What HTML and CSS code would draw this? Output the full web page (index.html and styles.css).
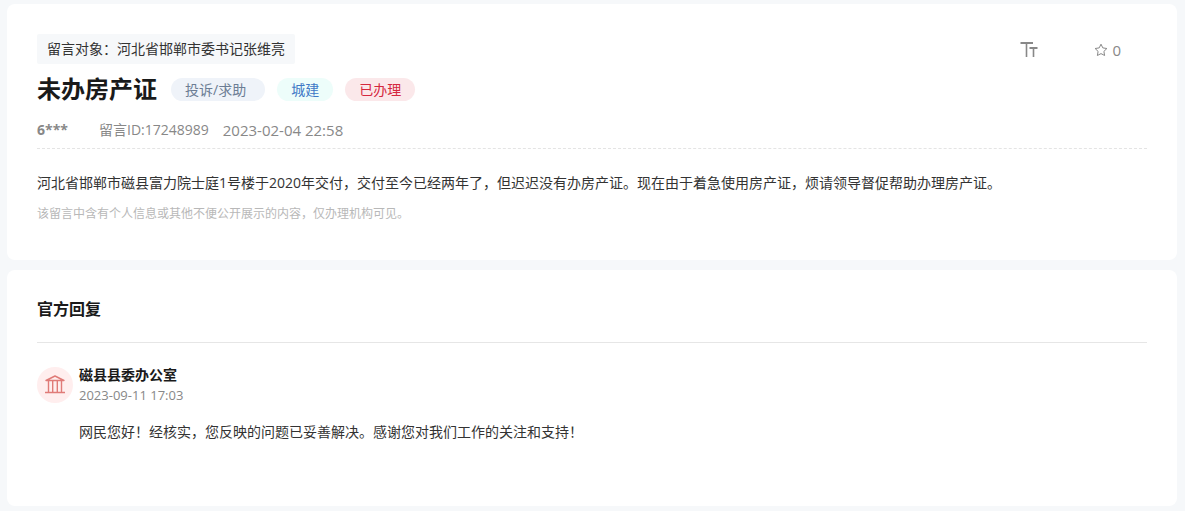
FILE: index.html
```
<!DOCTYPE html>
<html lang="zh-CN">
<head>
    <meta charset="UTF-8">
    <meta name="viewport" content="width=device-width, initial-scale=1">
    <title>未办房产证</title>
    <link rel="stylesheet" href="styles.css">
</head>
<body>
    <main class="page">
        <!-- 留言内容 -->
        <article class="card message">
            <header class="message-head">
                <div class="message-top">
                    <p class="target">留言对象：河北省邯郸市委书记张维亮</p>
                    <div class="tools">
                        <button class="tool" type="button" aria-label="字号">
                            <svg class="icon-size" viewBox="0 0 18 16" width="18" height="16" fill="none" stroke="currentColor">
                                <path d="M0.5 1H13M9.5 6H17.5" stroke-width="2"/>
                                <path d="M6.5 1V15M13.5 6V15" stroke-width="1.6"/>
                            </svg>
                        </button>
                        <button class="tool" type="button" aria-label="收藏">
                            <svg class="icon-star" viewBox="0 0 14 14" width="14" height="14" fill="none" stroke="currentColor" stroke-linejoin="round">
                                <path d="M7 1.2L8.8 4.9L12.9 5.5L9.9 8.4L10.6 12.5L7 10.6L3.4 12.5L4.1 8.4L1.1 5.5L5.2 4.9Z"/>
                            </svg>
                            <span>0</span>
                        </button>
                    </div>
                </div>
                <div class="title-row">
                    <h1 class="title">未办房产证</h1>
                    <span class="tag tag-type">投诉/求助</span>
                    <span class="tag tag-field">城建</span>
                    <span class="tag tag-state">已办理</span>
                </div>
                <div class="meta">
                    <span class="user">6***</span>
                    <span class="message-id">留言ID:17248989</span>
                    <time class="message-time" datetime="2023-02-04T22:58">2023-02-04 22:58</time>
                </div>
            </header>
            <p class="content">河北省邯郸市磁县富力院士庭1号楼于2020年交付，交付至今已经两年了，但迟迟没有办房产证。现在由于着急使用房产证，烦请领导督促帮助办理房产证。</p>
            <p class="hint">该留言中含有个人信息或其他不便公开展示的内容，仅办理机构可见。</p>
        </article>

        <!-- 官方回复 -->
        <section class="card reply">
            <h2 class="reply-title">官方回复</h2>
            <div class="reply-item">
                <div class="avatar">
                    <svg viewBox="0 0 20 20" width="20" height="20" fill="none" stroke="currentColor" stroke-width="1.4" stroke-linejoin="round" aria-hidden="true">
                        <path d="M1 5.5L10 1L19 5.5Z"/>
                        <path d="M3.5 5.5V17.5M7.7 5.5V17.5M12.3 5.5V17.5M16.5 5.5V17.5M0 17.5H20"/>
                    </svg>
                </div>
                <div class="reply-main">
                    <h3 class="reply-name">磁县县委办公室</h3>
                    <time class="reply-time" datetime="2023-09-11T17:03">2023-09-11 17:03</time>
                    <p class="reply-text">网民您好！经核实，您反映的问题已妥善解决。感谢您对我们工作的关注和支持！</p>
                </div>
            </div>
        </section>
    </main>
</body>
</html>
```
FILE: styles.css
```
* {
    margin: 0;
    padding: 0;
    box-sizing: border-box;
}

body {
    background: #f6f8fa;
    color: #333;
    font-family: "Open Sans", "Noto Sans CJK SC", sans-serif;
    font-size: 14px;
    line-height: 20px;
}

.page {
    display: flex;
    flex-direction: column;
    gap: 10px;
    padding: 4px 8px 5px 7px;
}

.card {
    background: #fff;
    border-radius: 8px;
    padding: 30px;
}

/* 留言内容 */
.message {
    padding-bottom: 36px;
}

.message-head {
    border-bottom: 1px dashed #e4e4e4;
    padding-bottom: 8px;
}

.message-top {
    display: flex;
    justify-content: space-between;
}

.target {
    background: #f6f8fa;
    border-radius: 2px;
    padding: 5px 10px;
}

.tools {
    display: flex;
    align-items: center;
    gap: 56px;
    padding: 2px 26px 0 0;
}

.tool {
    display: flex;
    align-items: center;
    gap: 4px;
    border: 0;
    background: none;
    color: #888;
    font-family: inherit;
    font-size: 15px;
    line-height: 20px;
    cursor: pointer;
}

.title-row {
    display: flex;
    align-items: center;
    gap: 12px;
    margin-top: 8px;
}

.title {
    margin-right: 2px;
    color: #1a1a1a;
    font-size: 24px;
    line-height: 34px;
}

.tag {
    border-radius: 12px;
    padding: 0 14px;
    line-height: 23px;
}

.tag-type {
    background: #eff3f9;
    color: #6c7d94;
    padding-right: 19px;
}

.tag-field {
    background: #edfdfa;
    color: #3f79c6;
}

.tag-state {
    background: #fbe8ea;
    color: #d5283e;
}

.meta {
    display: flex;
    align-items: center;
    gap: 14px;
    margin-top: 14px;
    color: #888;
}

.user {
    width: 48px;
    font-weight: bold;
}

.message-time {
    font-size: 15px;
}

.content {
    margin-top: 24px;
}

.hint {
    margin-top: 11px;
    color: #b8b8b8;
    font-size: 12px;
}

/* 官方回复 */
.reply {
    padding-bottom: 64px;
}

.reply-title {
    border-bottom: 1px solid #e6e6e6;
    padding-bottom: 24px;
    color: #1a1a1a;
    font-size: 16px;
    line-height: 18px;
}

.reply-item {
    display: flex;
    gap: 6px;
    margin-top: 24px;
}

.avatar {
    display: flex;
    flex: none;
    align-items: center;
    justify-content: center;
    width: 36px;
    height: 36px;
    border-radius: 50%;
    background: #ffeeee;
    color: #e07b78;
}

.reply-name {
    color: #1a1a1a;
    font-size: 14px;
    line-height: 16px;
}

.reply-time {
    display: block;
    color: #888;
    font-size: 13px;
    line-height: 24px;
}

.reply-text {
    margin-top: 15px;
}
```
